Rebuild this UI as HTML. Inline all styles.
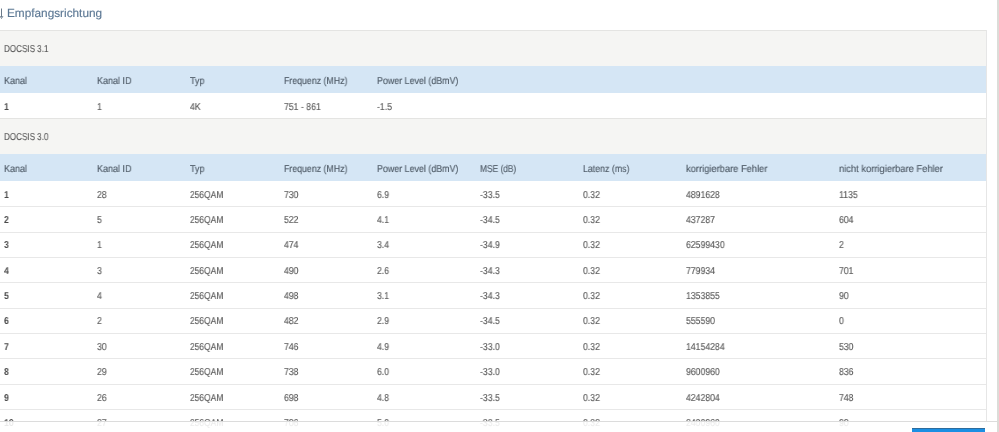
<!DOCTYPE html>
<html><head><meta charset="utf-8"><style>
html,body{margin:0;padding:0;background:#fff;width:999px;height:432px;overflow:hidden;position:relative;font-family:"Liberation Sans",sans-serif;}
.title{position:absolute;left:7.2px;top:5px;font-size:11.8px;line-height:16px;color:#5c7894;white-space:nowrap;will-change:transform;text-rendering:geometricPrecision;-webkit-text-stroke:0.15px currentColor}
.box{position:absolute;left:-1px;top:0;width:988px;height:432px;overflow:hidden}
.sec{position:absolute;left:0;right:0;background:#f5f5f3;border-top:1px solid #e4e4e2;box-sizing:border-box}
.hd{position:absolute;left:0;right:0;background:#d5e6f5}
.dr0{position:absolute;left:0;right:0;background:#fff}
.sep{position:absolute;left:0;right:0;height:1px;background:#e8e8e8}
.rb{position:absolute;left:986px;top:30px;width:1px;height:391px;background:#e6e6e6}
.c{position:absolute;white-space:nowrap;font-size:10.0px;line-height:12px;transform-origin:0 50%;text-rendering:geometricPrecision;will-change:transform;-webkit-text-stroke:0.15px currentColor;color:#5c5c5c}
.st{color:#5a5a5a}
.ht{color:#505c68}
.b{font-weight:bold;color:#4a4a4a;-webkit-text-stroke:0}
.foot{position:absolute;left:0;top:421px;width:999px;height:11px;border-top:1px solid #dcdcdc;background:rgba(255,255,255,0.88)}
.btn{position:absolute;left:912px;top:428px;width:73px;height:10px;background:#1b8fe3;border-top:1px solid #2f6c9c}
.sb{position:absolute;left:997px;top:0;width:2px;height:432px;background:#dcdcd8}
</style></head><body>
<svg style="position:absolute;left:0;top:0" width="6" height="22"><path d="M1.5 8.5 V17" stroke="#6a7a8a" stroke-width="1" fill="none"/><path d="M0 16 L1.5 18.5 L3 16" stroke="#6a7a8a" stroke-width="0.9" fill="none"/></svg>
<div class="title">Empfangsrichtung</div>
<div class="box"><div style="position:absolute;left:1px;top:0;width:987px;height:440px">
<div class="sec" style="top:30px;height:36px"></div>
<span class="c st" style="left:4px;top:43.53px;transform:scaleX(0.807)">DOCSIS 3.1</span><div class="hd" style="top:66px;height:27px"></div>
<span class="c ht" style="left:4px;top:75.53px;transform:scaleX(0.9)">Kanal</span><span class="c ht" style="left:97px;top:75.53px;transform:scaleX(0.9)">Kanal ID</span><span class="c ht" style="left:190px;top:75.53px;transform:scaleX(0.9)">Typ</span><span class="c ht" style="left:284px;top:75.53px;transform:scaleX(0.8779999999999999)">Frequenz (MHz)</span><span class="c ht" style="left:377px;top:75.53px;transform:scaleX(0.8880000000000001)">Power Level (dBmV)</span><div class="dr0" style="top:93px;height:25px"></div>
<span class="c dt b" style="left:4px;top:102.03px;transform:scaleX(0.8699999999999999)">1</span><span class="c dt" style="left:97px;top:102.03px;transform:scaleX(0.8699999999999999)">1</span><span class="c dt" style="left:190px;top:102.03px;transform:scaleX(0.8699999999999999)">4K</span><span class="c dt" style="left:284px;top:102.03px;transform:scaleX(0.8699999999999999)">751 - 861</span><span class="c dt" style="left:377px;top:102.03px;transform:scaleX(0.8699999999999999)">-1.5</span><div class="sec" style="top:118px;height:36px"></div>
<span class="c st" style="left:4px;top:131.53px;transform:scaleX(0.807)">DOCSIS 3.0</span><div class="hd" style="top:154px;height:27px"></div>
<span class="c ht" style="left:4px;top:163.84px;transform:scaleX(0.9)">Kanal</span><span class="c ht" style="left:97px;top:163.84px;transform:scaleX(0.9)">Kanal ID</span><span class="c ht" style="left:190px;top:163.84px;transform:scaleX(0.9)">Typ</span><span class="c ht" style="left:284px;top:163.84px;transform:scaleX(0.8779999999999999)">Frequenz (MHz)</span><span class="c ht" style="left:377px;top:163.84px;transform:scaleX(0.8880000000000001)">Power Level (dBmV)</span><span class="c ht" style="left:480px;top:163.84px;transform:scaleX(0.836)">MSE (dB)</span><span class="c ht" style="left:583px;top:163.84px;transform:scaleX(0.8789999999999999)">Latenz (ms)</span><span class="c ht" style="left:686px;top:163.84px;transform:scaleX(0.933)">korrigierbare Fehler</span><span class="c ht" style="left:839px;top:163.84px;transform:scaleX(0.9350000000000002)">nicht korrigierbare Fehler</span><span class="c dt b" style="left:4px;top:189.73px;transform:scaleX(0.8699999999999999)">1</span><span class="c dt" style="left:97px;top:189.73px;transform:scaleX(0.8699999999999999)">28</span><span class="c dt" style="left:190px;top:189.73px;transform:scaleX(0.843)">256QAM</span><span class="c dt" style="left:284px;top:189.73px;transform:scaleX(0.8699999999999999)">730</span><span class="c dt" style="left:377px;top:189.73px;transform:scaleX(0.8699999999999999)">6.9</span><span class="c dt" style="left:480px;top:189.73px;transform:scaleX(0.8699999999999999)">-33.5</span><span class="c dt" style="left:583px;top:189.73px;transform:scaleX(0.8699999999999999)">0.32</span><span class="c dt" style="left:686px;top:189.73px;transform:scaleX(0.8699999999999999)">4891628</span><span class="c dt" style="left:839px;top:189.73px;transform:scaleX(0.8699999999999999)">1135</span>
<div class="sep" style="top:206px"></div>
<span class="c dt b" style="left:4px;top:215.08px;transform:scaleX(0.8699999999999999)">2</span><span class="c dt" style="left:97px;top:215.08px;transform:scaleX(0.8699999999999999)">5</span><span class="c dt" style="left:190px;top:215.08px;transform:scaleX(0.843)">256QAM</span><span class="c dt" style="left:284px;top:215.08px;transform:scaleX(0.8699999999999999)">522</span><span class="c dt" style="left:377px;top:215.08px;transform:scaleX(0.8699999999999999)">4.1</span><span class="c dt" style="left:480px;top:215.08px;transform:scaleX(0.8699999999999999)">-34.5</span><span class="c dt" style="left:583px;top:215.08px;transform:scaleX(0.8699999999999999)">0.32</span><span class="c dt" style="left:686px;top:215.08px;transform:scaleX(0.8699999999999999)">437287</span><span class="c dt" style="left:839px;top:215.08px;transform:scaleX(0.8699999999999999)">604</span>
<div class="sep" style="top:232px"></div>
<span class="c dt b" style="left:4px;top:240.43px;transform:scaleX(0.8699999999999999)">3</span><span class="c dt" style="left:97px;top:240.43px;transform:scaleX(0.8699999999999999)">1</span><span class="c dt" style="left:190px;top:240.43px;transform:scaleX(0.843)">256QAM</span><span class="c dt" style="left:284px;top:240.43px;transform:scaleX(0.8699999999999999)">474</span><span class="c dt" style="left:377px;top:240.43px;transform:scaleX(0.8699999999999999)">3.4</span><span class="c dt" style="left:480px;top:240.43px;transform:scaleX(0.8699999999999999)">-34.9</span><span class="c dt" style="left:583px;top:240.43px;transform:scaleX(0.8699999999999999)">0.32</span><span class="c dt" style="left:686px;top:240.43px;transform:scaleX(0.8699999999999999)">62599430</span><span class="c dt" style="left:839px;top:240.43px;transform:scaleX(0.8699999999999999)">2</span>
<div class="sep" style="top:257px"></div>
<span class="c dt b" style="left:4px;top:265.79px;transform:scaleX(0.8699999999999999)">4</span><span class="c dt" style="left:97px;top:265.79px;transform:scaleX(0.8699999999999999)">3</span><span class="c dt" style="left:190px;top:265.79px;transform:scaleX(0.843)">256QAM</span><span class="c dt" style="left:284px;top:265.79px;transform:scaleX(0.8699999999999999)">490</span><span class="c dt" style="left:377px;top:265.79px;transform:scaleX(0.8699999999999999)">2.6</span><span class="c dt" style="left:480px;top:265.79px;transform:scaleX(0.8699999999999999)">-34.3</span><span class="c dt" style="left:583px;top:265.79px;transform:scaleX(0.8699999999999999)">0.32</span><span class="c dt" style="left:686px;top:265.79px;transform:scaleX(0.8699999999999999)">779934</span><span class="c dt" style="left:839px;top:265.79px;transform:scaleX(0.8699999999999999)">701</span>
<div class="sep" style="top:282px"></div>
<span class="c dt b" style="left:4px;top:291.14px;transform:scaleX(0.8699999999999999)">5</span><span class="c dt" style="left:97px;top:291.14px;transform:scaleX(0.8699999999999999)">4</span><span class="c dt" style="left:190px;top:291.14px;transform:scaleX(0.843)">256QAM</span><span class="c dt" style="left:284px;top:291.14px;transform:scaleX(0.8699999999999999)">498</span><span class="c dt" style="left:377px;top:291.14px;transform:scaleX(0.8699999999999999)">3.1</span><span class="c dt" style="left:480px;top:291.14px;transform:scaleX(0.8699999999999999)">-34.3</span><span class="c dt" style="left:583px;top:291.14px;transform:scaleX(0.8699999999999999)">0.32</span><span class="c dt" style="left:686px;top:291.14px;transform:scaleX(0.8699999999999999)">1353855</span><span class="c dt" style="left:839px;top:291.14px;transform:scaleX(0.8699999999999999)">90</span>
<div class="sep" style="top:308px"></div>
<span class="c dt b" style="left:4px;top:316.49px;transform:scaleX(0.8699999999999999)">6</span><span class="c dt" style="left:97px;top:316.49px;transform:scaleX(0.8699999999999999)">2</span><span class="c dt" style="left:190px;top:316.49px;transform:scaleX(0.843)">256QAM</span><span class="c dt" style="left:284px;top:316.49px;transform:scaleX(0.8699999999999999)">482</span><span class="c dt" style="left:377px;top:316.49px;transform:scaleX(0.8699999999999999)">2.9</span><span class="c dt" style="left:480px;top:316.49px;transform:scaleX(0.8699999999999999)">-34.5</span><span class="c dt" style="left:583px;top:316.49px;transform:scaleX(0.8699999999999999)">0.32</span><span class="c dt" style="left:686px;top:316.49px;transform:scaleX(0.8699999999999999)">555590</span><span class="c dt" style="left:839px;top:316.49px;transform:scaleX(0.8699999999999999)">0</span>
<div class="sep" style="top:333px"></div>
<span class="c dt b" style="left:4px;top:341.84px;transform:scaleX(0.8699999999999999)">7</span><span class="c dt" style="left:97px;top:341.84px;transform:scaleX(0.8699999999999999)">30</span><span class="c dt" style="left:190px;top:341.84px;transform:scaleX(0.843)">256QAM</span><span class="c dt" style="left:284px;top:341.84px;transform:scaleX(0.8699999999999999)">746</span><span class="c dt" style="left:377px;top:341.84px;transform:scaleX(0.8699999999999999)">4.9</span><span class="c dt" style="left:480px;top:341.84px;transform:scaleX(0.8699999999999999)">-33.0</span><span class="c dt" style="left:583px;top:341.84px;transform:scaleX(0.8699999999999999)">0.32</span><span class="c dt" style="left:686px;top:341.84px;transform:scaleX(0.8699999999999999)">14154284</span><span class="c dt" style="left:839px;top:341.84px;transform:scaleX(0.8699999999999999)">530</span>
<div class="sep" style="top:358px"></div>
<span class="c dt b" style="left:4px;top:367.19px;transform:scaleX(0.8699999999999999)">8</span><span class="c dt" style="left:97px;top:367.19px;transform:scaleX(0.8699999999999999)">29</span><span class="c dt" style="left:190px;top:367.19px;transform:scaleX(0.843)">256QAM</span><span class="c dt" style="left:284px;top:367.19px;transform:scaleX(0.8699999999999999)">738</span><span class="c dt" style="left:377px;top:367.19px;transform:scaleX(0.8699999999999999)">6.0</span><span class="c dt" style="left:480px;top:367.19px;transform:scaleX(0.8699999999999999)">-33.0</span><span class="c dt" style="left:583px;top:367.19px;transform:scaleX(0.8699999999999999)">0.32</span><span class="c dt" style="left:686px;top:367.19px;transform:scaleX(0.8699999999999999)">9600960</span><span class="c dt" style="left:839px;top:367.19px;transform:scaleX(0.8699999999999999)">836</span>
<div class="sep" style="top:384px"></div>
<span class="c dt b" style="left:4px;top:392.54px;transform:scaleX(0.8699999999999999)">9</span><span class="c dt" style="left:97px;top:392.54px;transform:scaleX(0.8699999999999999)">26</span><span class="c dt" style="left:190px;top:392.54px;transform:scaleX(0.843)">256QAM</span><span class="c dt" style="left:284px;top:392.54px;transform:scaleX(0.8699999999999999)">698</span><span class="c dt" style="left:377px;top:392.54px;transform:scaleX(0.8699999999999999)">4.8</span><span class="c dt" style="left:480px;top:392.54px;transform:scaleX(0.8699999999999999)">-33.5</span><span class="c dt" style="left:583px;top:392.54px;transform:scaleX(0.8699999999999999)">0.32</span><span class="c dt" style="left:686px;top:392.54px;transform:scaleX(0.8699999999999999)">4242804</span><span class="c dt" style="left:839px;top:392.54px;transform:scaleX(0.8699999999999999)">748</span>
<div class="sep" style="top:409px"></div>
<span class="c dt b" style="left:4px;top:417.89px;transform:scaleX(0.8699999999999999)">10</span><span class="c dt" style="left:97px;top:417.89px;transform:scaleX(0.8699999999999999)">27</span><span class="c dt" style="left:190px;top:417.89px;transform:scaleX(0.843)">256QAM</span><span class="c dt" style="left:284px;top:417.89px;transform:scaleX(0.8699999999999999)">706</span><span class="c dt" style="left:377px;top:417.89px;transform:scaleX(0.8699999999999999)">5.0</span><span class="c dt" style="left:480px;top:417.89px;transform:scaleX(0.8699999999999999)">-33.5</span><span class="c dt" style="left:583px;top:417.89px;transform:scaleX(0.8699999999999999)">0.32</span><span class="c dt" style="left:686px;top:417.89px;transform:scaleX(0.8699999999999999)">2400960</span><span class="c dt" style="left:839px;top:417.89px;transform:scaleX(0.8699999999999999)">90</span>

</div></div>
<div class="rb"></div>
<div class="foot"></div>
<div class="btn"></div>
<div class="sb"></div>
</body></html>
